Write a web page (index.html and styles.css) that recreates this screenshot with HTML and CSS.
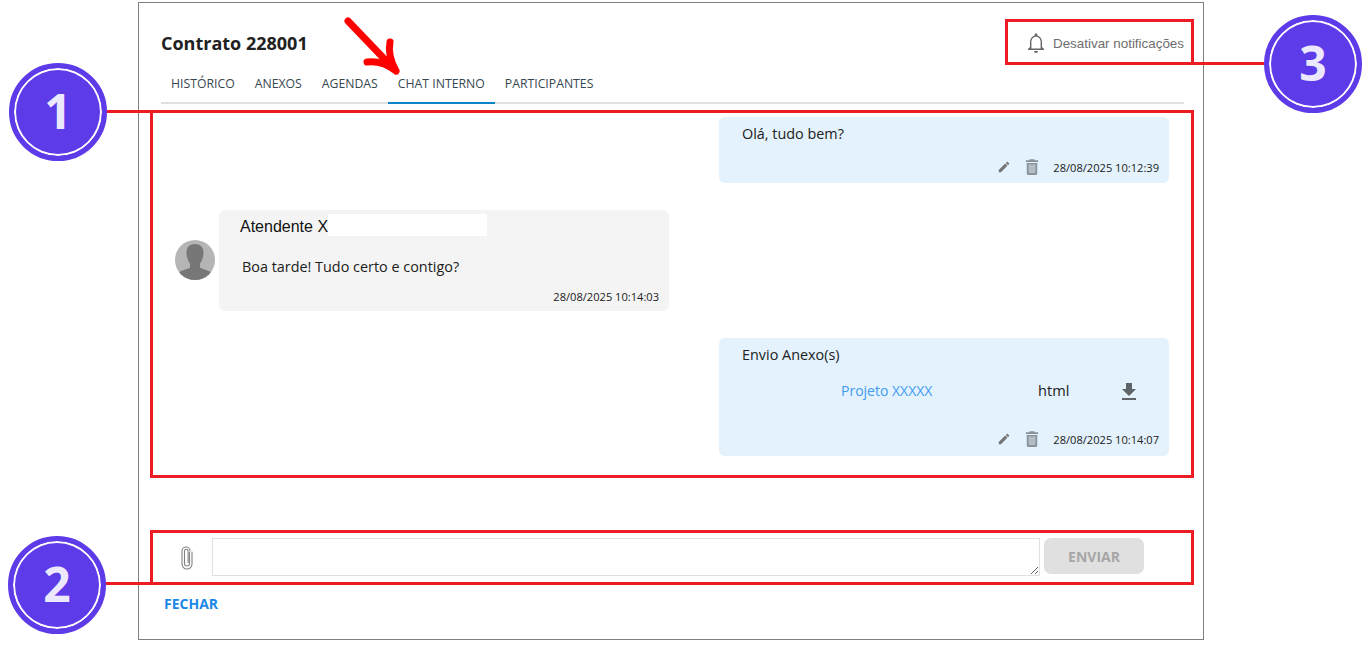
FILE: index.html
```html
<!DOCTYPE html>
<html lang="pt-BR">
<head>
    <meta charset="UTF-8">
    <meta name="viewport" content="width=device-width, initial-scale=1.0">
    <title>Chat interno</title>
    <link rel="stylesheet" href="styles.css">
</head>
<body>
    <div class="dialog">
        <header class="dialog-head">
            <h1>Contrato 228001</h1>
            <div class="notify">
                <svg class="bell" viewBox="0 0 24 24" width="24" height="24"><path d="M12 22c1.1 0 2-.9 2-2h-4c0 1.1.9 2 2 2zm6-6v-5c0-3.07-1.630-5.640-4.500-6.320V4c0-.83-.67-1.500-1.500-1.500s-1.500.67-1.500 1.500v.68C7.640 5.360 6 7.920 6 11v5l-2 2v1h16v-1l-2-2zm-1.400 1.500H7.400V11c0-2.800 1.800-5.200 4.600-5.200s4.600 2.400 4.600 5.200v6.500z"/></svg>
                <span>Desativar notificações</span>
            </div>
        </header>

        <nav class="tabs">
            <a class="tab">HISTÓRICO</a>
            <a class="tab">ANEXOS</a>
            <a class="tab">AGENDAS</a>
            <a class="tab active">CHAT INTERNO</a>
            <a class="tab">PARTICIPANTES</a>
        </nav>

        <section class="messages">
            <div class="row row-out">
                <div class="bubble bubble-out first">
                    <p class="msg-text">Olá, tudo bem?</p>
                    <div class="msg-foot">
                        <svg class="act edit" viewBox="0 0 24 24" width="14" height="14"><path d="M3 17.25V21h3.75L17.81 9.94l-3.75-3.75L3 17.25zM20.71 7.04a1 1 0 0 0 0-1.41l-2.34-2.34a1 1 0 0 0-1.41 0l-1.83 1.83 3.75 3.75 1.83-1.83z"/></svg>
                        <svg class="act trash" viewBox="0 0 16 18" width="14" height="16"><path d="M5.500 0h5l.7 1.300H15v2H1v-2h3.800zM2 4.300h12V16.500a1.500 1.500 0 0 1-1.500 1.500h-9A1.500 1.500 0 0 1 2 16.500z"/><path class="trash-in" d="M4 6h8v10H4z"/></svg>
                        <span class="stamp">28/08/2025 10:12:39</span>
                    </div>
                </div>
            </div>

            <div class="row row-in">
                <svg class="avatar" viewBox="0 0 40 40" width="40" height="40">
                    <defs>
                        <clipPath id="avatarClip"><circle cx="20" cy="20" r="20"/></clipPath>
                    </defs>
                    <circle cx="20" cy="20" r="20" fill="#b5b5b5"/>
                    <path clip-path="url(#avatarClip)" fill="#777" d="M20 4c-5.500 0-8.500 3.500-8.500 8.500 0 4.500 1.500 8.500 3.500 11v4c-2 2-9 2.500-12 5.500v7h34v-7c-3-3-10-3.500-12-5.500v-4c2-2.500 3.500-6.500 3.500-11 0-5-3-8.500-8.500-8.500z"/>
                </svg>
                <div class="bubble bubble-in">
                    <div class="sender">Atendente X<span class="redact"></span></div>
                    <p class="msg-text in-text">Boa tarde! Tudo certo e contigo?</p>
                    <div class="msg-foot">
                        <span class="stamp">28/08/2025 10:14:03</span>
                    </div>
                </div>
            </div>

            <div class="row row-out">
                <div class="bubble bubble-out">
                    <p class="msg-text">Envio Anexo(s)</p>
                    <div class="attachment">
                        <a class="file-name">Projeto XXXXX</a>
                        <span class="file-type">html</span>
                        <svg class="download" viewBox="0 0 24 24" width="24" height="24"><path d="M19 9h-4V3H9v6H5l7 7 7-7zM5 18v2h14v-2H5z"/></svg>
                    </div>
                    <div class="msg-foot">
                        <svg class="act edit" viewBox="0 0 24 24" width="14" height="14"><path d="M3 17.25V21h3.75L17.81 9.94l-3.75-3.75L3 17.25zM20.71 7.04a1 1 0 0 0 0-1.41l-2.34-2.34a1 1 0 0 0-1.41 0l-1.83 1.83 3.75 3.75 1.83-1.83z"/></svg>
                        <svg class="act trash" viewBox="0 0 16 18" width="14" height="16"><path d="M5.500 0h5l.7 1.300H15v2H1v-2h3.800zM2 4.300h12V16.500a1.500 1.500 0 0 1-1.500 1.500h-9A1.500 1.500 0 0 1 2 16.500z"/><path class="trash-in" d="M4 6h8v10H4z"/></svg>
                        <span class="stamp">28/08/2025 10:14:07</span>
                    </div>
                </div>
            </div>
        </section>

        <form class="composer">
            <svg class="clip" viewBox="0 0 14 24" width="14" height="24"><path d="M9.500 6.500v11a2.500 2.500 0 0 1-5 0V5a1.800 1.800 0 0 1 3.600 0v11.500M12 6v12a5 5 0 0 1-10 0V5a4 4 0 0 1 8 0" fill="none" stroke="#808080" stroke-width="1.100" stroke-linecap="round"/></svg>
            <textarea class="composer-input"></textarea>
            <button class="send" type="button" disabled>ENVIAR</button>
        </form>

        <a class="close">FECHAR</a>
    </div>

    <!-- marcacoes do manual em cima da tela -->
    <div class="mark box-1"></div>
    <div class="mark box-2"></div>
    <div class="mark box-3"></div>
    <div class="lead lead-1"></div>
    <div class="lead lead-2"></div>
    <div class="lead lead-3"></div>
    <div class="badge badge-1">1</div>
    <div class="badge badge-2">2</div>
    <div class="badge badge-3">3</div>
    <svg class="arrow" viewBox="0 0 70 70" width="70" height="70">
        <path d="M5 7 L50 54" fill="none" stroke="#f00" stroke-width="7" stroke-linecap="round"/>
        <path d="M47 28 C45 38 48 48 53 57 M24 48 C33 47 44 50 53 57" fill="none" stroke="#f00" stroke-width="7" stroke-linecap="round"/>
        <path d="M44 44 L56 61 L38 50 z" fill="#f00"/>
    </svg>
</body>
</html>
```

FILE: styles.css
```css
* {
    box-sizing: border-box;
}
body {
    margin: 0;
    background: #fff;
    font-family: "Open Sans", sans-serif;
    color: #212121;
}
.dialog {
    width: 1066px;
    height: 638px;
    margin: 2px 0 0 138px;
    border: 1px solid #808080;
    padding: 0 19px 0 22px;
    display: flex;
    flex-direction: column;
}
.dialog-head {
    height: 62px;
    padding-top: 18px;
    display: flex;
    justify-content: space-between;
    align-items: center;
}
.dialog-head h1 {
    margin: 0;
    font-size: 18px;
    font-weight: 700;
    color: #212121;
}
.notify {
    display: flex;
    align-items: center;
    gap: 5px;
    font-family: "Liberation Sans", sans-serif;
    font-size: 13.4px;
    color: #6e6e6e;
}
.bell {
    fill: #666;
}
.tabs {
    height: 39px;
    display: flex;
    border-bottom: 2px solid #e0e0e0;
}
.tab {
    padding: 0 10px;
    height: 39px;
    line-height: 37px;
    font-size: 12.25px;
    color: #37474f;
}
.tab.active {
    border-bottom: 2px solid #0a84c6;
}
.messages {
    height: 400px;
    padding: 13px 15px 0 14px;
    display: flex;
    flex-direction: column;
    gap: 27px;
}
.row {
    display: flex;
}
.row-out {
    justify-content: flex-end;
}
.row-in {
    align-items: center;
    gap: 4px;
}
.avatar {
    margin-bottom: 1px;
}
.bubble {
    width: 450px;
    border-radius: 6px;
    font-size: 14.4px;
}
.bubble-out {
    background: #e3f2fd;
    padding: 8px 10px 9px 23px;
}
.bubble-out.first {
    height: 66px;
}
.bubble-in {
    background: #f4f4f4;
    height: 101px;
    padding: 6px 10px 5px 21px;
}
.msg-text {
    margin: 0;
    line-height: 18px;
}
.in-text {
    margin: 20px 0 0 2px;
}
.sender {
    height: 22px;
    line-height: 22px;
    font-family: "Liberation Sans", sans-serif;
    font-size: 16px;
    color: #111;
    display: flex;
}
.redact {
    width: 159px;
    height: 22px;
    margin-top: -2px;
    background: #fff;
}
.msg-foot {
    display: flex;
    justify-content: flex-end;
    align-items: center;
    margin-top: 16px;
    height: 16px;
}
.bubble-in .msg-foot {
    margin-top: 12px;
}
.act {
    margin-right: 7px;
}
.edit {
    fill: #757575;
}
.trash {
    fill: #8a9299;
    margin: 0 14px 0 7px;
}
.trash-in {
    fill: #b3bcc4;
}
.stamp {
    font-size: 11.1px;
    color: #212121;
}
.attachment {
    display: flex;
    align-items: center;
    height: 24px;
    margin-top: 14px;
    font-size: 14px;
}
.file-name {
    margin-left: 99px;
    width: 197px;
    color: #3f9cf0;
}
.file-type {
    width: 79px;
    font-size: 14.6px;
    color: #212121;
}
.download {
    fill: #5f6468;
    margin-top: 3px;
}
.bubble-out .attachment + .msg-foot {
    margin-top: 29px;
}
.composer {
    height: 48px;
    margin-top: 28px;
    display: flex;
    align-items: flex-start;
    padding-top: 6px;
}
.clip {
    margin: 8px 18px 0 19px;
}
.composer-input {
    width: 828px;
    height: 38px;
    border: 1px solid #e0e0e0;
    background: #fff;
    margin: 0;
    padding: 4px;
    font-family: inherit;
}
.send {
    width: 100px;
    height: 36px;
    margin-left: 4px;
    border: none;
    border-radius: 7px;
    background: #e0e0e0;
    color: #a6a6a6;
    font-family: inherit;
    font-size: 14px;
    font-weight: 700;
}
.close {
    margin: 14px 0 0 3px;
    font-size: 14px;
    font-weight: 700;
    color: #1e88e5;
}
.mark {
    position: absolute;
    border: 3px solid #ed1c24;
}
.box-1 {
    left: 150px;
    top: 110px;
    width: 1044px;
    height: 368px;
}
.box-2 {
    left: 150px;
    top: 530px;
    width: 1044px;
    height: 55px;
}
.box-3 {
    left: 1005px;
    top: 19px;
    width: 189px;
    height: 46px;
}
.lead {
    position: absolute;
    height: 3px;
    background: #ed1c24;
}
.lead-1 {
    left: 100px;
    top: 110px;
    width: 60px;
}
.lead-2 {
    left: 100px;
    top: 582px;
    width: 60px;
}
.lead-3 {
    left: 1190px;
    top: 62px;
    width: 80px;
}
.badge {
    position: absolute;
    width: 98px;
    height: 98px;
    border-radius: 50%;
    background: #5e3be8;
    border: 5px solid #5e3be8;
    box-shadow: inset 0 0 0 2px #fff;
    color: #ece8fd;
    font-size: 48px;
    font-weight: 700;
    line-height: 86px;
    text-align: center;
}
.badge-1 {
    left: 9px;
    top: 63px;
}
.badge-2 {
    left: 8px;
    top: 536px;
}
.badge-3 {
    left: 1264px;
    top: 15px;
}
.arrow {
    position: absolute;
    left: 343px;
    top: 14px;
}
```
